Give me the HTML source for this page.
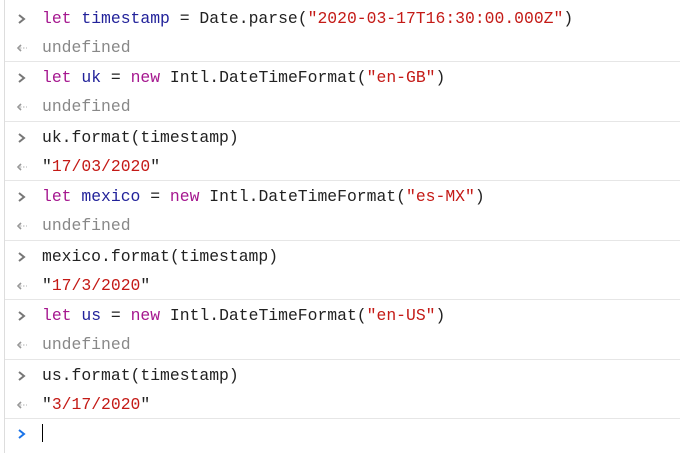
<!DOCTYPE html><html><head><style>
body{margin:0;width:680px;height:453px;background:#fff;overflow:hidden;font-family:"Liberation Mono",monospace;font-size:16.4px;position:relative}
.vl{position:absolute;left:4px;top:0;width:1px;height:453px;background:#ddd}
.r{position:absolute;left:42px;height:29px;line-height:29px;white-space:pre;color:#222}
.hr{position:absolute;left:5px;right:0;height:1px;background:#e6e6e6}
.a,.b{position:absolute;left:15px;width:14px;height:29px}
.a svg,.b svg{position:absolute;top:8px;left:0}
.k{color:#a5178f}.v{color:#22229a}.s{color:#c41a16}.u{color:#888}
</style></head><body>
<div class="vl"></div>
<svg width="0" height="0" style="position:absolute"><defs>
<symbol id="gt" viewBox="0 0 14 14"><path d="M4 3 L9 7 L4 11" fill="none" stroke-width="2"/></symbol>
<symbol id="lt" viewBox="0 0 14 14"><path d="M6 4 L3 7 L6 10" fill="none" stroke="#999" stroke-width="1.6"/><path d="M5 7 H12" stroke="#ccc" stroke-width="1.4" stroke-dasharray="1.5 1.5"/></symbol>
</defs></svg>
<div class="a" style="top:4px"><svg width="14" height="14" stroke="#777"><use href="#gt"/></svg></div><div class="r" style="top:4px"><span class="k">let</span> <span class="v">timestamp</span> = Date.parse(<span class="s">"2020-03-17T16:30:00.000Z"</span>)</div>
<div class="b" style="top:33px"><svg width="14" height="14"><use href="#lt"/></svg></div><div class="r u" style="top:33px">undefined</div>
<div class="hr" style="top:61px"></div>
<div class="a" style="top:63px"><svg width="14" height="14" stroke="#777"><use href="#gt"/></svg></div><div class="r" style="top:63px"><span class="k">let</span> <span class="v">uk</span> = <span class="k">new</span> Intl.DateTimeFormat(<span class="s">"en-GB"</span>)</div>
<div class="b" style="top:92px"><svg width="14" height="14"><use href="#lt"/></svg></div><div class="r u" style="top:92px">undefined</div>
<div class="hr" style="top:121px"></div>
<div class="a" style="top:123px"><svg width="14" height="14" stroke="#777"><use href="#gt"/></svg></div><div class="r" style="top:123px">uk.format(timestamp)</div>
<div class="b" style="top:152px"><svg width="14" height="14"><use href="#lt"/></svg></div><div class="r" style="top:152px">"<span class="s">17/03/2020</span>"</div>
<div class="hr" style="top:180px"></div>
<div class="a" style="top:182px"><svg width="14" height="14" stroke="#777"><use href="#gt"/></svg></div><div class="r" style="top:182px"><span class="k">let</span> <span class="v">mexico</span> = <span class="k">new</span> Intl.DateTimeFormat(<span class="s">"es-MX"</span>)</div>
<div class="b" style="top:211px"><svg width="14" height="14"><use href="#lt"/></svg></div><div class="r u" style="top:211px">undefined</div>
<div class="hr" style="top:240px"></div>
<div class="a" style="top:242px"><svg width="14" height="14" stroke="#777"><use href="#gt"/></svg></div><div class="r" style="top:242px">mexico.format(timestamp)</div>
<div class="b" style="top:271px"><svg width="14" height="14"><use href="#lt"/></svg></div><div class="r" style="top:271px">"<span class="s">17/3/2020</span>"</div>
<div class="hr" style="top:299px"></div>
<div class="a" style="top:301px"><svg width="14" height="14" stroke="#777"><use href="#gt"/></svg></div><div class="r" style="top:301px"><span class="k">let</span> <span class="v">us</span> = <span class="k">new</span> Intl.DateTimeFormat(<span class="s">"en-US"</span>)</div>
<div class="b" style="top:330px"><svg width="14" height="14"><use href="#lt"/></svg></div><div class="r u" style="top:330px">undefined</div>
<div class="hr" style="top:359px"></div>
<div class="a" style="top:361px"><svg width="14" height="14" stroke="#777"><use href="#gt"/></svg></div><div class="r" style="top:361px">us.format(timestamp)</div>
<div class="b" style="top:390px"><svg width="14" height="14"><use href="#lt"/></svg></div><div class="r" style="top:390px">"<span class="s">3/17/2020</span>"</div>
<div class="hr" style="top:418px"></div>
<div class="a" style="top:419px"><svg width="14" height="14" stroke="#1a73e8"><use href="#gt"/></svg></div>
<div style="position:absolute;left:42px;top:424px;width:1px;height:18px;background:#000"></div>
</body></html>
